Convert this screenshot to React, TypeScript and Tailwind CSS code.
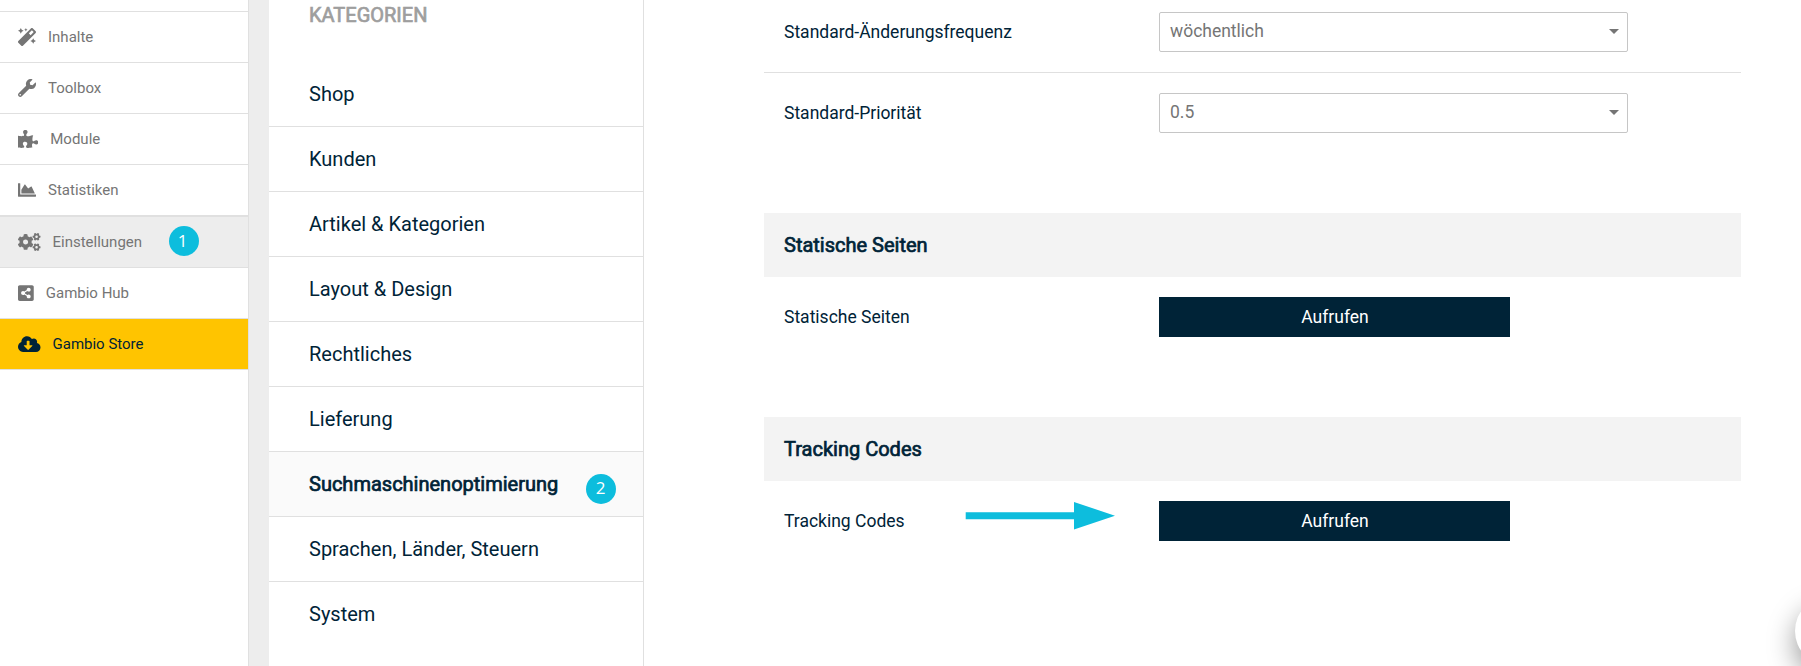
import type { IconType } from "react-icons";
import {
  FaChartArea,
  FaCloudDownloadAlt,
  FaCogs,
  FaMagic,
  FaPuzzlePiece,
  FaShareAltSquare,
  FaWrench,
} from "react-icons/fa";
import clsx from "clsx";

interface NavItem {
  label: string;
  icon: IconType;
  iconClass: string;
  rowClass?: string;
  badge?: string;
}

const navItems: NavItem[] = [
  { label: "Inhalte", icon: FaMagic, iconClass: "w-[18px]" },
  { label: "Toolbox", icon: FaWrench, iconClass: "w-[18px]" },
  { label: "Module", icon: FaPuzzlePiece, iconClass: "w-[20.25px]" },
  { label: "Statistiken", icon: FaChartArea, iconClass: "w-[18px]" },
  {
    label: "Einstellungen",
    icon: FaCogs,
    iconClass: "w-[22.5px]",
    rowClass: "h-[52px] border-t-2 bg-[#ededed]",
    badge: "1",
  },
  { label: "Gambio Hub", icon: FaShareAltSquare, iconClass: "w-[15.75px]" },
  {
    label: "Gambio Store",
    icon: FaCloudDownloadAlt,
    iconClass: "w-[22.5px]",
    rowClass: "bg-[#ffc400] text-[#002337]",
  },
];

const categories = [
  "Shop",
  "Kunden",
  "Artikel & Kategorien",
  "Layout & Design",
  "Rechtliches",
  "Lieferung",
  "Suchmaschinenoptimierung",
  "Sprachen, Länder, Steuern",
  "System",
];

const activeCategory = "Suchmaschinenoptimierung";

function StepBadge({ children, className }: { children: string; className?: string }) {
  return (
    <span
      className={clsx(
        "absolute flex size-[30px] items-center justify-center rounded-full bg-[#0dbddd] pb-0.5 font-['Open_Sans',sans-serif] text-[17px] leading-none text-white",
        className
      )}
    >
      {children}
    </span>
  );
}

function Sidebar() {
  return (
    <nav className="w-[249px] shrink-0 border-r border-[#e0e0e0] pt-[11px] text-[15px] text-[#757575]">
      {navItems.map(({ label, icon: Icon, iconClass, rowClass, badge }) => (
        <a
          key={label}
          className={clsx(
            "relative flex items-center border-t border-[#e0e0e0] pl-[18px]",
            rowClass,
            !badge && "h-[51px]"
          )}
        >
          <Icon className={clsx("h-[18px] shrink-0", iconClass)} />
          <span className="ml-3">{label}</span>
          {badge && <StepBadge className="top-[9px] left-[168.5px] pr-0.5">{badge}</StepBadge>}
        </a>
      ))}
      <div className="border-t border-[#e0e0e0]" />
    </nav>
  );
}

function Categories() {
  return (
    <aside className="w-[375px] shrink-0 border-r border-[#e0e0e0] text-[20px] text-[#002337]">
      <h2 className="h-[62px] pl-10 leading-[30px] text-[#9e9e9e] [-webkit-text-stroke:0.7px]">KATEGORIEN</h2>
      <ul>
        {categories.map((name) => {
          const active = name === activeCategory;
          return (
            <li
              key={name}
              className={clsx(
                "relative flex h-[65px] items-center border-b border-[#e0e0e0] pl-10 last:h-16 last:border-b-0",
                active && "bg-[#fafafa] [-webkit-text-stroke:0.7px]"
              )}
            >
              {name}
              {active && (
                <StepBadge className="top-[21.5px] left-[317px] pr-px [-webkit-text-stroke:0]">2</StepBadge>
              )}
            </li>
          );
        })}
      </ul>
    </aside>
  );
}

function SelectRow({ label, value }: { label: string; value: string }) {
  return (
    <div className="flex h-[81px] items-center border-b border-[#e0e0e0] pl-5 last:h-20 last:border-b-0">
      <span className="w-[375px]">{label}</span>
      <button className="flex h-10 w-[469px] items-center justify-between rounded-[2px] border border-[#c6c6c6] pr-2 pb-px pl-[10px] text-[#757575]">
        {value}
        <span className="border-x-[5px] border-t-[5px] border-x-transparent border-t-[#757575]" />
      </button>
    </div>
  );
}

function LinkSection({ title, arrow = false }: { title: string; arrow?: boolean }) {
  return (
    <section className="h-[204px]">
      <h3 className="flex h-16 items-center bg-[#f3f3f3] pl-5 text-[20px] [-webkit-text-stroke:0.7px]">{title}</h3>
      <div className="relative flex h-20 items-center pl-5">
        <span className="w-[375px]">{title}</span>
        {arrow && (
          <svg className="absolute top-[21px] left-[201px]" width="151" height="28" viewBox="0 0 151 28">
            <path d="M.7 10.2H109V0l41 13.7L109 27.4V17.2H.7z" fill="#0dbddd" />
          </svg>
        )}
        <button className="h-10 w-[351px] bg-[#002337] pl-px text-white">Aufrufen</button>
      </div>
    </section>
  );
}

export default function App() {
  return (
    <div className="relative flex h-[666px] w-[1801px] overflow-hidden bg-white font-[Roboto,sans-serif]">
      <Sidebar />
      <div className="w-5 shrink-0 bg-[#ededed]" />
      <Categories />
      <main className="ml-[120px] w-[977px] text-[17.5px] text-[#002337]">
        <div className="-mt-2 h-[221px]">
          <SelectRow label="Standard-Änderungsfrequenz" value="wöchentlich" />
          <SelectRow label="Standard-Priorität" value="0.5" />
        </div>
        <LinkSection title="Statische Seiten" />
        <LinkSection title="Tracking Codes" arrow />
      </main>
      <div className="absolute top-[596px] left-[1795px] size-[70px] rounded-full bg-white shadow-[0_12px_28px_rgba(0,0,0,0.4)]" />
    </div>
  );
}
